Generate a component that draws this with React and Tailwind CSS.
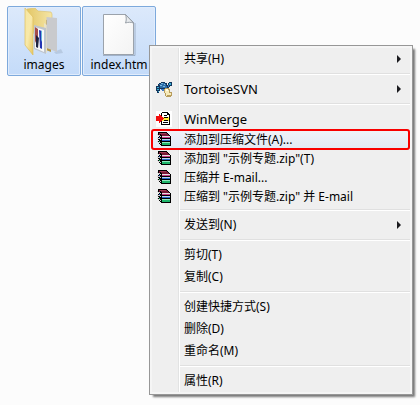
import React from "react";

function FolderIcon() {
  return (
    <svg width="40" height="48" viewBox="0 0 40 48" aria-hidden="true">
      <defs>
        <linearGradient id="folderFront" x1="0" y1="0" x2="1" y2="1">
          <stop offset="0" stopColor="#f6e6a2" />
          <stop offset="0.5" stopColor="#f8e9a9" />
          <stop offset="1" stopColor="#e6c65e" />
        </linearGradient>
        <linearGradient id="folderBack" x1="0" y1="0" x2="1" y2="0">
          <stop offset="0" stopColor="#e3c767" />
          <stop offset="1" stopColor="#f5e6a8" />
        </linearGradient>
      </defs>
      <path d="M30 44l7-3 2 4-7 1z" fill="#a9bbd2" opacity="0.6" />
      <path d="M3 1l8-1 3 3 13 1 1 2v12L10 26z" fill="url(#folderBack)" stroke="#dcc067" strokeWidth="0.6" />
      <path d="M22 12l5-1v33l-5-2z" fill="#b99a45" />
      <path d="M20 15l3 2v28l-3-2z" fill="#ebe3c4" />
      <path d="M22.500 9l10.500 1v34l-10.500-4z" fill="#c9cacd" />
      <path d="M10 17l12 3v26l-12-5z" fill="#bfc5cc" />
      <path d="M11 19l9 3v22l-9-4z" fill="#f7f8fa" />
      <path d="M11 19l3 2v8l-3 6z" fill="#a54d4b" />
      <path d="M12 27l3 3-1 10-2-1z" fill="#1f2440" />
      <path d="M15 22l3 1v18l-2-1z" fill="#2434b4" />
      <path d="M17 23h1v9l-1 2z" fill="#67b7d8" />
      <path d="M1 0l8 9v38L1 37z" fill="url(#folderFront)" stroke="#dfbf5d" strokeWidth="0.7" />
    </svg>
  );
}

function FileIcon() {
  return (
    <svg width="34" height="43" viewBox="0 0 34 43" aria-hidden="true">
      <defs>
        <linearGradient id="filePaper" x1="0" y1="0" x2="1" y2="1">
          <stop offset="0" stopColor="#ffffff" />
          <stop offset="1" stopColor="#f3f3f3" />
        </linearGradient>
      </defs>
      <path d="M1 42.500h32V10" fill="none" stroke="#8494aa" opacity="0.6" />
      <path d="M1.500 1.500h22l8 8v32h-30z" fill="url(#filePaper)" stroke="#9ba2ab" />
      <path d="M23.500 1.500c1 3 1 6 0 8.500 3-1 5-1 8 0z" fill="#e8ebee" stroke="#8e969f" strokeWidth="0.9" />
    </svg>
  );
}

function TurtleIcon() {
  return (
    <svg width="16" height="16" viewBox="0 0 16 16" aria-hidden="true" shapeRendering="crispEdges">
      <path d="M5 1h4v1h2v2h1V2h1V1h3v4h-2v1h-1v2H4v2H3v2H1v-2H0V5h2V3h1V2h2z" fill="#12365c" />
      <path d="M5 2h4v1h1v2h1v2H4V4H3V3h2z" fill="#2d6da8" />
      <path d="M5 2h2v1H5zM8 3h1v1H8zM4 4h2v1H4zM7 5h2v1H7z" fill="#7abbe2" />
      <path d="M13 2h2v2h-2zM1 6h2v1H1zM1 8h2v1H1zM2 10h1v1H2z" fill="#38acd2" />
      <path d="M12 4h1v2h-1zM5 8h3v2H6V9H5z" fill="#3f79c4" />
      <path d="M9 7h4v1h1v3h2v4h-1v1h-5v-1H9v-3H8V8h1z" fill="#b89d5c" />
      <path d="M9 8h3v1h1v3h2v2h-4v1h-1v-3H9z" fill="#f7eab9" />
      <path d="M10 8h2v2h-2z" fill="#fffbea" />
    </svg>
  );
}

function MergeIcon() {
  return (
    <svg width="16" height="16" viewBox="0 0 16 16" aria-hidden="true" shapeRendering="crispEdges">
      <path d="M0 0h16v16H0z" fill="#fff" />
      <path d="M6 1h6v1h1v1h1v11H5V2h1z" fill="#000" />
      <path d="M6 2h5v2h2v9H6z" fill="#fff" />
      <path d="M6 6h7v4H6z" fill="#ffee38" />
      <path d="M8 4h3v1H8zM8 6h4v1H8zM8 9h4v1H8zM7 11h5v1H7z" fill="#000" />
      <path d="M0 5h3V3h1v1h1v1h1v1h1v1h1v1H7v1H6v1H5v1H4v1H3v-2H0z" fill="#f20d0d" />
    </svg>
  );
}

function BooksIcon() {
  return (
    <svg width="14" height="15" viewBox="0 0 14 15" aria-hidden="true" shapeRendering="crispEdges">
      <path d="M1 0h9v1h1v1h1v1h1v1h1v10H4v-1H3v-1H2v-1H1V9h1V8H1V5h1V4H1z" fill="#000" />
      <path d="M2 1h8v1h1v1h1v1H5V3H4V2H2z" fill="#7a1936" />
      <path d="M3 1h6v1H3z" fill="#a23a55" />
      <path d="M5 4h8v1H5z" fill="#e9dfe2" />
      <path d="M5 5h8v1H5z" fill="#c93a86" />
      <path d="M5 7h8v1H5z" fill="#bfd4f2" />
      <path d="M5 8h8v1H5z" fill="#2968cf" />
      <path d="M5 10h8v1H5z" fill="#8fe9c0" />
      <path d="M5 11h8v2H5z" fill="#1eb56a" />
      <path d="M0 2h1v1H0zM1 3h2v1H1zM3 4h1v1H3zM0 6h1v1H0zM1 6h2v1H1zM3 7h1v1H3zM0 9h1v1H0zM1 10h2v1H1zM3 11h1v1H3z" fill="#d5d2d2" />
      <path d="M2 2h1v1H2z" fill="#7a1936" />
      <path d="M2 5h1v1H2z" fill="#2968cf" />
      <path d="M2 9h1v1H2z" fill="#1eb56a" />
    </svg>
  );
}

const groups = [
  [{ label: "共享(H)", submenu: true }],
  [{ label: "TortoiseSVN", icon: TurtleIcon, submenu: true, latin: true }],
  [
    { label: "WinMerge", icon: MergeIcon, latin: true },
    { label: "添加到压缩文件(A)...", icon: BooksIcon, compact: true, active: true },
    { label: '添加到 "示例专题.zip"(T)', icon: BooksIcon, compact: true },
    { label: "压缩并 E-mail...", icon: BooksIcon, compact: true },
    { label: '压缩到 "示例专题.zip" 并 E-mail', icon: BooksIcon, compact: true },
  ],
  [{ label: "发送到(N)", submenu: true }],
  [{ label: "剪切(T)" }, { label: "复制(C)" }],
  [{ label: "创建快捷方式(S)" }, { label: "删除(D)" }, { label: "重命名(M)" }],
  [{ label: "属性(R)" }],
];

function MenuItem({ label, icon: Icon, submenu, compact, active, latin }) {
  return (
    <button
      type="button"
      role="menuitem"
      aria-haspopup={submenu ? "menu" : undefined}
      className={`relative flex w-full items-center text-left ${compact ? "h-[19px]" : "h-[22px]"} ${
        latin ? "text-[13px]" : "text-[12px]"
      } ${active ? "bg-linear-to-b from-[#f0f3f8] to-[#e2e9f4]" : ""}`}
    >
      <span className="flex w-8 shrink-0 items-center justify-center pr-3 pl-1">{Icon && <Icon />}</span>
      <span className="grow whitespace-nowrap">{label}</span>
      {submenu && (
        <svg width="4" height="8" viewBox="0 0 4 8" className="mr-[9px] shrink-0" aria-hidden="true">
          <path d="M0 0l4 4-4 4z" fill="#1b1b1f" />
        </svg>
      )}
      {active && <span className="absolute -inset-y-px right-0 -left-px rounded-[3px] border-2 border-[#f80000]" />}
    </button>
  );
}

function DesktopItem({ label, children }) {
  return (
    <button
      type="button"
      className="flex h-[70px] w-[74px] flex-col items-center justify-end rounded-[2px] border border-[#7da9dc] bg-linear-to-b from-[#dce9fb] to-[#c4dbf9] pb-px inset-ring inset-ring-[#e0ecfc]"
    >
      {children}
      <span className="h-[18px] leading-[18px]">{label}</span>
    </button>
  );
}

export default function App() {
  return (
    <main className="relative min-h-screen bg-[#fcfcfc] font-['Noto_Sans','Noto_Sans_CJK_SC',sans-serif] text-[12px] leading-4 text-black">
      <div className="flex gap-px pt-[6px] pl-[7px]">
        <DesktopItem label="images">
          <FolderIcon />
        </DesktopItem>
        <DesktopItem label="index.htm">
          <FileIcon />
        </DesktopItem>
      </div>

      <div
        role="menu"
        className="absolute top-[45px] right-[7px] left-[149px] border border-[#979797] bg-[#f5f5f5] p-[2px] shadow-[3px_3px_2px_-1px_#777]"
      >
        <div className="relative bg-[#efefef]">
          <span className="absolute inset-y-0 left-[26px] w-[2px] border-r border-l border-r-white border-l-[#e2e3e3]" />
          {groups.map((items, index) => (
            <React.Fragment key={items[0].label}>
              {index > 0 && (
                <div role="separator" className="flex h-2 items-center pl-7">
                  <span className="h-[2px] grow border-t border-b border-t-[#e0e0e0] border-b-white" />
                </div>
              )}
              {items.map((item) => (
                <MenuItem key={item.label} {...item} />
              ))}
            </React.Fragment>
          ))}
        </div>
      </div>
    </main>
  );
}
